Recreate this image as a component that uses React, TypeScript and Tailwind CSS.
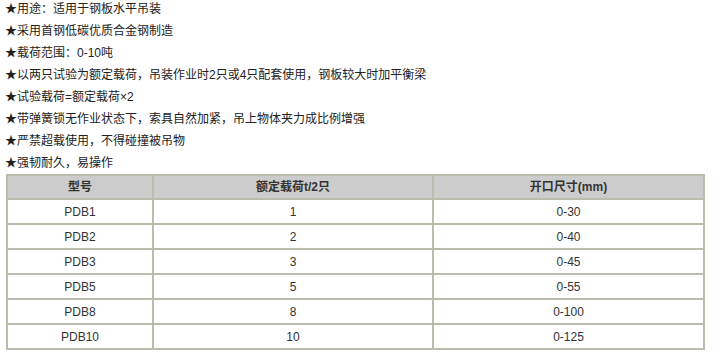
export default function App() {
  const features = [
    '用途：适用于钢板水平吊装',
    '采用首钢低碳优质合金钢制造',
    '载荷范围：0-10吨',
    '以两只试验为额定载荷，吊装作业时2只或4只配套使用，钢板较大时加平衡梁',
    '试验载荷=额定载荷×2',
    '带弹簧锁无作业状态下，索具自然加紧，吊上物体夹力成比例增强',
    '严禁超载使用，不得碰撞被吊物',
    '强韧耐久，易操作',
  ];

  const rows = [
    ['PDB1', '1', '0-30'],
    ['PDB2', '2', '0-40'],
    ['PDB3', '3', '0-45'],
    ['PDB5', '5', '0-55'],
    ['PDB8', '8', '0-100'],
    ['PDB10', '10', '0-125'],
  ];

  return (
    <div
      className="bg-white w-[727px] h-[354px] overflow-hidden text-[#222]"
      style={{ fontFamily: '"Liberation Sans", "Noto Sans CJK SC", sans-serif' }}
    >
      <div className="-mt-[2px] pl-[5px]">
        {features.map((f) => (
          <div key={f} className="h-[22px] leading-[22px] text-[12px] whitespace-nowrap">
            ★{f}
          </div>
        ))}
      </div>

      <table className="ml-[6px] w-[699px] border-collapse border-2 border-[#bcbcae] text-[12px] text-[#333] text-center">
        <thead>
          <tr className="bg-[#cccccc] h-[24px]">
            <th className="w-[146px] border-2 border-[#bcbcae] font-bold">型号</th>
            <th className="w-[280px] border-2 border-[#bcbcae] font-bold">额定载荷t/2只</th>
            <th className="border-2 border-[#bcbcae] font-bold">开口尺寸(mm)</th>
          </tr>
        </thead>
        <tbody>
          {rows.map((r) => (
            <tr key={r[0]} className="h-[25px]">
              {r.map((c, i) => (
                <td key={i} className="border-2 border-[#bcbcae] p-0">
                  {c}
                </td>
              ))}
            </tr>
          ))}
        </tbody>
      </table>
    </div>
  );
}
